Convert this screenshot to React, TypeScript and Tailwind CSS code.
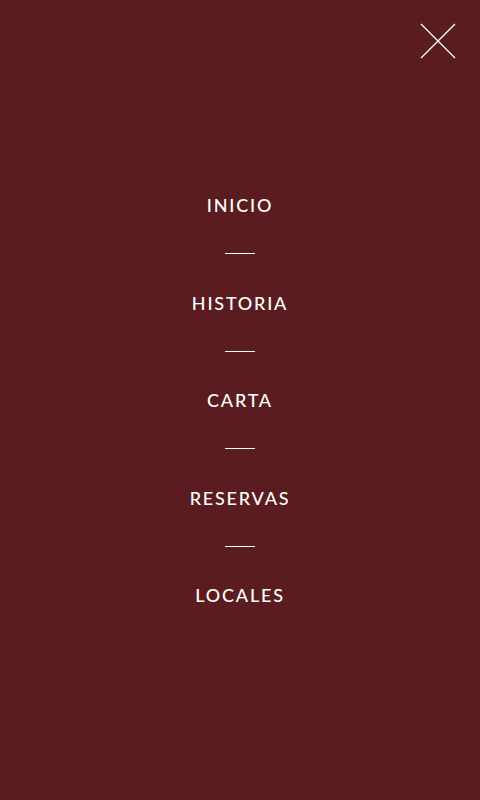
const links = ['INICIO', 'HISTORIA', 'CARTA', 'RESERVAS', 'LOCALES'];

export default function App() {
  return (
    <div
      className="relative flex h-[800px] w-full items-center justify-center bg-[#5a1c1e] text-white"
      style={{ fontFamily: 'Lato, "Open Sans", sans-serif' }}
    >
      <button className="absolute right-[24px] top-[23px] h-[36px] w-[36px]" aria-label="Cerrar">
        <svg viewBox="0 0 36 36" className="h-full w-full" fill="none" stroke="white" strokeWidth="1.3">
          <path d="M1 1L35 35M35 1L1 35" />
        </svg>
      </button>
      <nav className="flex flex-col items-center gap-[36.25px]">
        {links.map((label, i) => (
          <div key={label} className="contents">
            {i > 0 && <span className="block h-px w-[30px] bg-white" />}
            <a href="#" className="text-[18px] font-medium leading-[24px] tracking-[0.1em]">
              {label}
            </a>
          </div>
        ))}
      </nav>
    </div>
  );
}
